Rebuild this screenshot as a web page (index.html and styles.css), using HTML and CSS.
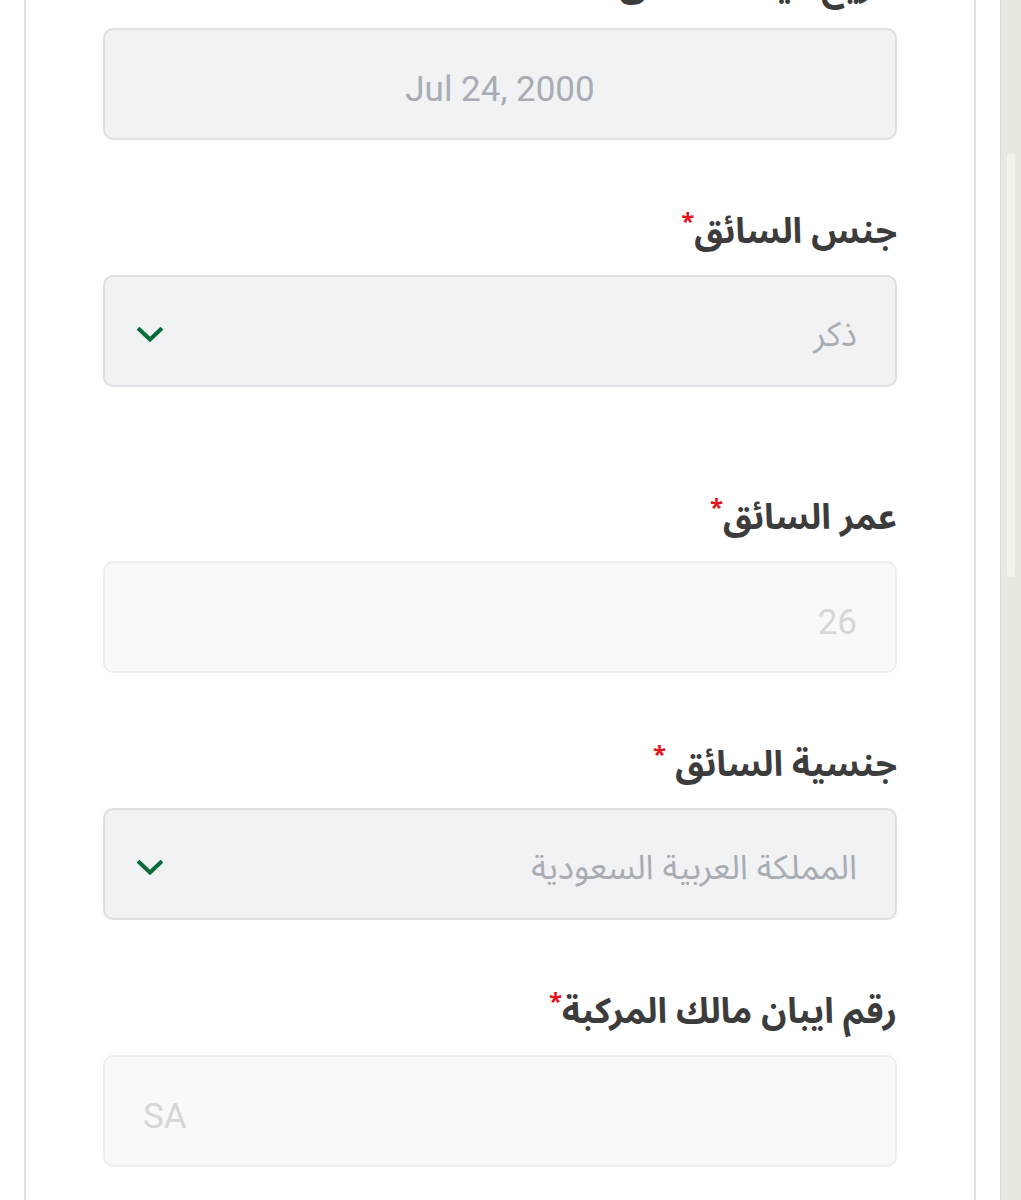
FILE: index.html
```html
<!DOCTYPE html>
<html lang="ar">
<head>
<meta charset="utf-8">
<title>بيانات السائق</title>
<link rel="stylesheet" href="styles.css">
</head>
<body>
<div class="page">
  <main class="viewport">
    <section class="card">
      <form class="form" dir="rtl">
        <div class="field">
          <div class="label">تاريخ ميلاد السائق<span class="req">*</span></div>
          <div class="control control-center latin">Jul 24, 2000</div>
        </div>
        <div class="field field-spaced">
          <div class="label">جنس السائق<span class="req">*</span></div>
          <div class="control control-select">
            <span class="value">ذكر</span>
            <svg class="chevron" viewBox="0 0 26 16" width="26" height="16"><path d="M2.5 2.5 L13 12.5 L23.5 2.5" fill="none" stroke="#0b6a39" stroke-width="4" stroke-linecap="square"/></svg>
          </div>
        </div>
        <div class="field">
          <div class="label">عمر السائق<span class="req">*</span></div>
          <div class="control control-disabled latin">26</div>
        </div>
        <div class="field">
          <div class="label">جنسية السائق <span class="req">*</span></div>
          <div class="control control-select">
            <span class="value">المملكة العربية السعودية</span>
            <svg class="chevron" viewBox="0 0 26 16" width="26" height="16"><path d="M2.5 2.5 L13 12.5 L23.5 2.5" fill="none" stroke="#0b6a39" stroke-width="4" stroke-linecap="square"/></svg>
          </div>
        </div>
        <div class="field">
          <div class="label">رقم ايبان مالك المركبة<span class="req">*</span></div>
          <div class="control control-disabled control-ltr latin" dir="ltr">SA</div>
        </div>
      </form>
    </section>
  </main>
  <aside class="scrollbar"><div class="thumb"></div></aside>
</div>
</body>
</html>
```
FILE: styles.css
```css
html, body {
  margin: 0;
  padding: 0;
  background: #ffffff;
  overflow: hidden;
}

.page {
  display: flex;
  height: 1200px;
  overflow: hidden;
}

.viewport {
  flex: 1;
  padding: 0 24px;
  overflow: hidden;
}

.card {
  border-left: 2px solid #e1e1e1;
  border-right: 2px solid #e1e1e1;
  padding: 0 77px;
  margin-top: -39px;
  min-height: 1300px;
  box-sizing: border-box;
}

.form {
  display: flex;
  flex-direction: column;
}

.field {
  display: flex;
  flex-direction: column;
  gap: 19px;
  margin-bottom: 68px;
}

.field-spaced {
  margin-bottom: 107px;
}

.label {
  font-family: "Noto Sans Arabic", "DejaVu Sans", sans-serif;
  font-weight: 700;
  font-size: 35px;
  line-height: 48px;
  height: 48px;
  color: #3c3c3c;
  text-align: right;
  white-space: nowrap;
}

.req {
  color: #e3141b;
  font-size: 24px;
  font-weight: 700;
  vertical-align: top;
  line-height: 30px;
}

.control {
  height: 112px;
  box-sizing: border-box;
  border: 2px solid #dcdfe3;
  border-radius: 10px;
  background: #f1f2f4;
  display: flex;
  align-items: center;
  padding: 8px 38px 0;
  color: #a8adb5;
  font-family: "Noto Sans Arabic", "DejaVu Sans", sans-serif;
  font-size: 34px;
}

.latin {
  font-family: "Liberation Sans Narrow", "Roboto", sans-serif;
  font-size: 35px;
  padding-top: 10px;
}

.control-center {
  justify-content: center;
}

.control-select {
  justify-content: space-between;
  padding-left: 32px;
}

.control-disabled {
  background: #f8f9fa;
  border-color: #eceef1;
  color: #d4d6da;
}

.control-ltr {
  direction: ltr;
  justify-content: flex-start;
}

.chevron {
  display: block;
  flex: none;
}

.scrollbar {
  width: 21px;
  flex: none;
  box-sizing: border-box;
  background: #e7e8e0;
  border-left: 1px solid #d9dad2;
  padding-top: 153px;
}

.thumb {
  width: 8px;
  height: 424px;
  margin-left: 6px;
  border-radius: 4px;
  background: #f3f4ee;
}
```
